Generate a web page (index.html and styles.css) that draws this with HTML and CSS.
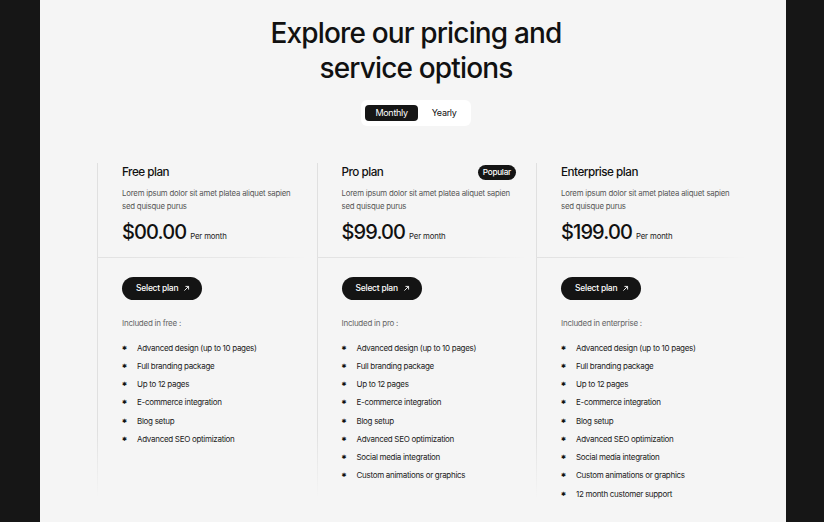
FILE: index.html
```html
<!DOCTYPE html>
<html lang="en">
<head>
<meta charset="utf-8">
<title>Pricing</title>
<link rel="stylesheet" href="styles.css">
</head>
<body>
<main class="page">
  <h1 class="heading">Explore our pricing and<br>service options</h1>
  <div class="toggle">
    <span class="toggle-btn active">Monthly</span>
    <span class="toggle-btn">Yearly</span>
  </div>
  <section class="plans">
    <article class="card">
      <div class="card-top">
        <div class="title-row"><h2 class="plan-title">Free plan</h2></div>
        <p class="desc">Lorem ipsum dolor sit amet platea aliquet sapien sed quisque purus</p>
        <div class="price-row"><span class="price">$00.00</span><span class="per">Per month</span></div>
      </div>
      <div class="card-body">
        <a class="select-btn" href="#">Select plan <svg class="arrow" viewBox="0 0 10 10" width="7" height="7"><path d="M2 8 L8 2 M3.5 2 H8 V6.5" fill="none" stroke="#fff" stroke-width="1.3"/></svg></a>
        <p class="included">Included in free :</p>
        <ul class="features">
          <li>Advanced design (up to 10 pages)</li>
          <li>Full branding package</li>
          <li>Up to 12 pages</li>
          <li>E-commerce integration</li>
          <li>Blog setup</li>
          <li>Advanced SEO optimization</li>
        </ul>
      </div>
    </article>
    <article class="card">
      <div class="card-top">
        <div class="title-row"><h2 class="plan-title">Pro plan</h2><span class="badge">Popular</span></div>
        <p class="desc">Lorem ipsum dolor sit amet platea aliquet sapien sed quisque purus</p>
        <div class="price-row"><span class="price">$99.00</span><span class="per">Per month</span></div>
      </div>
      <div class="card-body">
        <a class="select-btn" href="#">Select plan <svg class="arrow" viewBox="0 0 10 10" width="7" height="7"><path d="M2 8 L8 2 M3.5 2 H8 V6.5" fill="none" stroke="#fff" stroke-width="1.3"/></svg></a>
        <p class="included">Included in pro :</p>
        <ul class="features">
          <li>Advanced design (up to 10 pages)</li>
          <li>Full branding package</li>
          <li>Up to 12 pages</li>
          <li>E-commerce integration</li>
          <li>Blog setup</li>
          <li>Advanced SEO optimization</li>
          <li>Social media integration</li>
          <li>Custom animations or graphics</li>
        </ul>
      </div>
    </article>
    <article class="card">
      <div class="card-top">
        <div class="title-row"><h2 class="plan-title">Enterprise plan</h2></div>
        <p class="desc">Lorem ipsum dolor sit amet platea aliquet sapien sed quisque purus</p>
        <div class="price-row"><span class="price">$199.00</span><span class="per">Per month</span></div>
      </div>
      <div class="card-body">
        <a class="select-btn" href="#">Select plan <svg class="arrow" viewBox="0 0 10 10" width="7" height="7"><path d="M2 8 L8 2 M3.5 2 H8 V6.5" fill="none" stroke="#fff" stroke-width="1.3"/></svg></a>
        <p class="included">Included in enterprise :</p>
        <ul class="features">
          <li>Advanced design (up to 10 pages)</li>
          <li>Full branding package</li>
          <li>Up to 12 pages</li>
          <li>E-commerce integration</li>
          <li>Blog setup</li>
          <li>Advanced SEO optimization</li>
          <li>Social media integration</li>
          <li>Custom animations or graphics</li>
          <li>12 month customer support</li>
        </ul>
      </div>
    </article>
  </section>
</main>
</body>
</html>
```
FILE: styles.css
```css
* { box-sizing: border-box; }
html, body { margin: 0; padding: 0; }
body {
  background: #161616;
  font-family: Inter, "Liberation Sans", sans-serif;
  color: #111;
  height: 522px;
  overflow: hidden;
}
.page {
  margin-left: 40px;
  width: 746px;
  height: 522px;
  background: #f5f5f5;
  display: flex;
  flex-direction: column;
  align-items: center;
  padding-top: 16px;
}
.heading {
  margin: 0 0 0 6px;
  font-size: 28px;
  line-height: 35px;
  font-weight: 500;
  letter-spacing: -0.85px;
  text-align: center;
  color: #111;
}
.toggle {
  margin: 14px 0 0 6px;
  background: #fff;
  border-radius: 6px;
  padding: 5px 4px;
  display: flex;
  gap: 4px;
}
.toggle-btn {
  font-size: 9px;
  letter-spacing: -0.3px;
  height: 16px;
  line-height: 16px;
  padding: 0 10px;
  border-radius: 4px;
  color: #111;
}
.toggle-btn.active {
  background: #161616;
  color: #fff;
}
.plans {
  align-self: flex-start;
  margin-left: 57px;
  margin-top: 37px;
  display: flex;
}
.card {
  width: 219.5px;
  position: relative;
}
.card::before {
  content: "";
  position: absolute;
  left: 0;
  top: 0;
  width: 1px;
  height: 335px;
  background: linear-gradient(#e0e0e0, #e0e0e0 80%, rgba(224,224,224,0));
}
.card-top {
  padding: 0 18px 13px 25px;
  position: relative;
}
.card-top::after {
  content: "";
  position: absolute;
  left: 0;
  bottom: 0;
  width: 210px;
  height: 1px;
  background: linear-gradient(90deg, #e2e2e2, #e8e8e8 70%, rgba(232,232,232,0));
}
.title-row {
  display: flex;
  justify-content: space-between;
  align-items: center;
  height: 17px;
}
.plan-title {
  margin: 0;
  font-size: 11.7px;
  font-weight: 500;
  letter-spacing: -0.5px;
  color: #111;
}
.badge {
  background: #141414;
  color: #fff;
  font-size: 8.2px;
  font-weight: 500;
  letter-spacing: -0.25px;
  height: 15px;
  line-height: 15px;
  padding: 0 5px;
  border-radius: 8px;
  margin-top: 1px;
  margin-right: 2px;
}
.desc {
  margin: 7px 0 0;
  max-width: 176px;
  font-size: 7.8px;
  line-height: 13px;
  color: #555;
  letter-spacing: -0.2px;
}
.price-row {
  margin-top: 6px;
  display: flex;
  align-items: baseline;
  gap: 4px;
}
.price {
  font-size: 20px;
  line-height: 26px;
  font-weight: 500;
  letter-spacing: -0.9px;
}
.per {
  font-size: 7.8px;
  color: #222;
  letter-spacing: -0.15px;
}
.card-body {
  padding: 17px 18px 0 25px;
}
.select-btn {
  display: inline-flex;
  align-items: center;
  gap: 5px;
  height: 23px;
  padding: 0 12px 0 14px;
  background: #141414;
  color: #fff;
  border-radius: 12px;
  font-size: 8.5px;
  font-weight: 500;
  letter-spacing: -0.25px;
  text-decoration: none;
}
.included {
  margin: 18px 0 0;
  font-size: 8px;
  color: #666;
  letter-spacing: -0.25px;
}
.features {
  list-style: none;
  margin: 11px 0 0;
  padding: 0;
}
.features li {
  position: relative;
  padding-left: 15px;
  font-size: 8px;
  line-height: 18.25px;
  color: #222;
  letter-spacing: -0.3px;
}
.features li::before {
  content: "\2731";
  font-family: "DejaVu Sans", sans-serif;
  font-size: 6px;
  position: absolute;
  left: 0;
  top: 0;
  color: #111;
}
```
